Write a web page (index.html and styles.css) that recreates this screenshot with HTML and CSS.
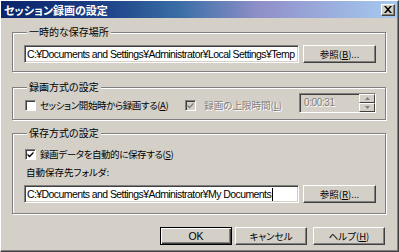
FILE: index.html
```html
<!DOCTYPE html>
<html lang="ja">
<head>
    <meta charset="UTF-8">
    <title>セッション録画の設定</title>
    <link rel="stylesheet" href="styles.css">
</head>
<body>

<div class="window">
    <div class="titlebar">
        <span class="title">セッション録画の設定</span>
        <button class="close" type="button">
            <svg width="8" height="7" viewBox="0 0 8 7"><path d="M0 0h2l2 2.2L6 0h2L5 3.5 8 7H6L4 4.8 2 7H0l3-3.5z" fill="#000"/></svg>
        </button>
    </div>

    <div class="content">
        <fieldset class="group group-temp">
            <legend>一時的な保存場所</legend>
            <div class="row">
                <div class="field path">C:¥Documents and Settings¥Administrator¥Local Settings¥Temp</div>
                <button class="btn browse" type="button">参照(<u>B</u>)...</button>
            </div>
        </fieldset>

        <fieldset class="group group-mode">
            <legend>録画方式の設定</legend>
            <div class="row">
                <label class="check first">
                    <span class="box"></span>
                    <span class="text">セッション開始時から録画する(<u>A</u>)</span>
                </label>
                <label class="check limit disabled">
                    <span class="box checked"></span>
                    <span>録画の上限時間(<u>L</u>)</span>
                </label>
                <div class="spin">
                    <div class="field spin-value">0:00:31</div>
                    <div class="spin-btns">
                        <span class="spin-btn"><svg width="5" height="3" viewBox="0 0 5 3"><path d="M2.5 0L5 3H0z" fill="#808080"/></svg></span>
                        <span class="spin-btn"><svg width="5" height="3" viewBox="0 0 5 3"><path d="M0 0h5L2.5 3z" fill="#808080"/></svg></span>
                    </div>
                </div>
            </div>
        </fieldset>

        <fieldset class="group group-save">
            <legend>保存方式の設定</legend>
            <label class="check first">
                <span class="box checked"></span>
                <span class="text">録画データを自動的に保存する(<u>S</u>)</span>
            </label>
            <div class="caption">自動保存先フォルダ:</div>
            <div class="row">
                <div class="field path">C:¥Documents and Settings¥Administrator¥My Documents<span class="caret"></span></div>
                <button class="btn browse" type="button">参照(<u>R</u>)...</button>
            </div>
        </fieldset>

        <div class="actions">
            <button class="btn default ok" type="button">OK</button>
            <button class="btn cancel" type="button">キャンセル</button>
            <button class="btn help" type="button">ヘルプ(<u>H</u>)</button>
        </div>
    </div>
</div>

</body>
</html>
```

FILE: styles.css
```css
body {
    margin: 0;
    background: #d4d0c8;
    font-family: "Noto Sans CJK JP", sans-serif;
    font-size: 9.5px;
    line-height: 12px;
    font-feature-settings: "palt";
    color: #000;
}

u {
    text-decoration: underline;
    text-underline-offset: 1px;
}

.window {
    width: 399px;
    height: 252px;
    box-sizing: border-box;
    background: #d4d0c8;
    border: 1px solid;
    border-color: #fff #404040 #404040 #fff;
    box-shadow: inset -1px -1px 0 #808080;
    display: flex;
    flex-direction: column;
}

.titlebar {
    height: 17px;
    margin-right: 1px;
    display: flex;
    align-items: center;
    justify-content: space-between;
    padding: 0 2px 0 3px;
    background: linear-gradient(to right, #0a246a, #1c3f86 25%, #3a6ea5 45%, #8f8fc8 65%, #a6caf0);
}

.title {
    color: #fff;
    font-weight: bold;
    font-size: 11px;
    line-height: 12px;
}

.close {
    width: 14px;
    height: 12px;
    padding: 0;
    display: flex;
    align-items: center;
    justify-content: center;
    background: #d4d0c8;
    border: 1px solid;
    border-color: #fff #404040 #404040 #fff;
    box-shadow: inset -1px -1px 0 #808080;
}

.content {
    padding: 8px 12px 0 11px;
    display: flex;
    flex-direction: column;
}

.group {
    margin: 0;
    padding: 0 9px 0 11px;
    border: 1px solid #808080;
    box-shadow: 1px 1px 0 #fff, inset 1px 1px 0 #fff;
    min-width: 0;
}

.group legend {
    padding: 0 2px;
    margin-left: 3px;
    font-size: 10px;
    line-height: 12px;
    background: #d4d0c8;
}

.group-temp {
    padding-top: 7px;
    padding-bottom: 8px;
}

.group-mode {
    margin-top: 9px;
    padding-top: 0;
    padding-bottom: 6px;
}

.group-save {
    margin-top: 7px;
    padding-top: 9px;
    padding-bottom: 10px;
}

.row {
    display: flex;
    align-items: center;
}

.field {
    box-sizing: border-box;
    height: 18px;
    background: #fff;
    border: 1px solid;
    border-color: #808080 #fff #fff #808080;
    box-shadow: inset 1px 1px 0 #404040, inset -1px -1px 0 #d4d0c8;
    padding: 0 2px;
    line-height: 16px;
    white-space: nowrap;
    overflow: hidden;
}

.path {
    width: 275px;
    font-family: "Liberation Sans", sans-serif;
    font-size: 10.5px;
    letter-spacing: -0.58px;
}

.caret {
    display: inline-block;
    width: 1px;
    height: 13px;
    background: #000;
    vertical-align: -3px;
    margin-left: 1px;
}

.btn {
    box-sizing: border-box;
    height: 18px;
    padding: 0;
    background: #d4d0c8;
    border: 1px solid;
    border-color: #fff #404040 #404040 #fff;
    box-shadow: inset -1px -1px 0 #808080;
    font-family: "Noto Sans CJK JP", sans-serif;
    font-size: 9.5px;
    font-feature-settings: "palt";
    line-height: 15px;
    color: #000;
}

.browse {
    width: 73px;
    margin-left: 4px;
}

.check {
    display: flex;
    align-items: center;
    gap: 4px;
    white-space: nowrap;
    height: 12px;
}

.check .text {
    letter-spacing: -0.4px;
}

.check.first {
    margin-left: 1px;
}

.box {
    box-sizing: border-box;
    width: 11px;
    height: 11px;
    background: #fff;
    border: 1px solid;
    border-color: #808080 #fff #fff #808080;
    box-shadow: inset 1px 1px 0 #404040;
}

.box.checked {
    background: #fff url("data:image/svg+xml,%3Csvg xmlns='http://www.w3.org/2000/svg' width='9' height='9'%3E%3Cpath d='M1.5 3.5l2 2 4-4v2l-4 4-2-2z' fill='%23000'/%3E%3C/svg%3E") no-repeat center;
}

.group-mode .row {
    height: 20px;
}

.group-mode .check {
    margin-top: 4px;
}

.limit {
    margin-left: 17px;
    gap: 8px;
}

.disabled {
    color: #808080;
    text-shadow: 1px 1px 0 #fff;
}

.disabled .box.checked {
    background: #d4d0c8 url("data:image/svg+xml,%3Csvg xmlns='http://www.w3.org/2000/svg' width='9' height='9'%3E%3Cpath d='M1.5 3.5l2 2 4-4v2l-4 4-2-2z' fill='%23808080'/%3E%3C/svg%3E") no-repeat center;
}

.spin {
    display: flex;
    margin-left: auto;
    height: 20px;
}

.spin-value {
    width: 60px;
    height: 20px;
    background: #d4d0c8;
    color: #808080;
    text-shadow: 1px 1px 0 #fff;
    font-family: "Liberation Sans", sans-serif;
    font-size: 10px;
    letter-spacing: -0.4px;
    line-height: 18px;
    padding-left: 4px;
    border-right: none;
    box-shadow: inset 1px 1px 0 #404040;
}

.spin-btns {
    width: 16px;
    display: flex;
    flex-direction: column;
    border-top: 1px solid #808080;
    border-bottom: 1px solid #fff;
    border-right: 1px solid #fff;
}

.spin-btn {
    flex: 1;
    display: flex;
    align-items: center;
    justify-content: center;
    border: 1px solid;
    border-color: #fff #404040 #404040 #fff;
}

.caption {
    margin: 6px 0 0 2px;
    line-height: 12px;
}

.group-save .row {
    margin-top: 7px;
}

.actions {
    display: flex;
    justify-content: flex-end;
    margin-top: 13px;
    padding-right: 1px;
}

.actions .btn {
    width: 72px;
}

.default {
    border-color: #000;
    box-shadow: inset 1px 1px 0 #fff, inset -1px -1px 0 #404040, inset -2px -2px 0 #808080;
}

.ok {
    font-family: "Liberation Sans", sans-serif;
    font-size: 10.5px;
}

.cancel {
    margin-left: 3px;
}

.help {
    margin-left: 6px;
}
```
